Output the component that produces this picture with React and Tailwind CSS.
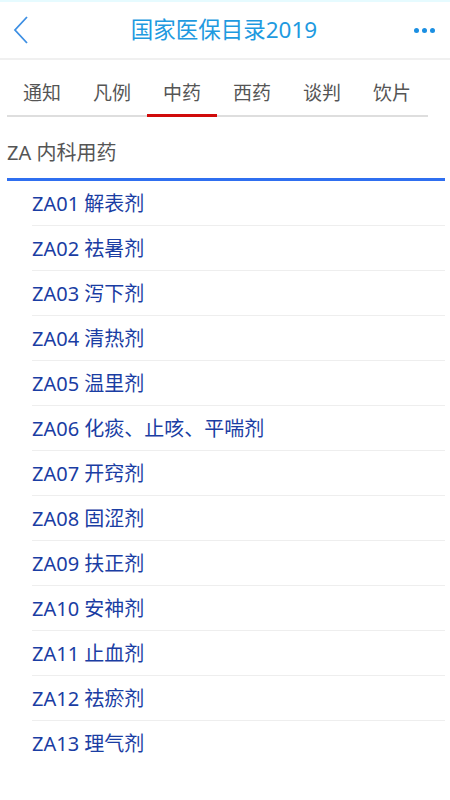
import React from 'react';

const tabs = ['通知', '凡例', '中药', '西药', '谈判', '饮片'];

const items = [
  'ZA01 解表剂',
  'ZA02 祛暑剂',
  'ZA03 泻下剂',
  'ZA04 清热剂',
  'ZA05 温里剂',
  'ZA06 化痰、止咳、平喘剂',
  'ZA07 开窍剂',
  'ZA08 固涩剂',
  'ZA09 扶正剂',
  'ZA10 安神剂',
  'ZA11 止血剂',
  'ZA12 祛瘀剂',
  'ZA13 理气剂',
];

export default function App() {
  const active = 2;

  return (
    <div
      className="w-[450px] h-[800px] bg-white overflow-hidden flex flex-col"
      style={{ fontFamily: '"Noto Sans", "Noto Sans CJK SC", sans-serif' }}
    >
      {/* status strip */}
      <div className="h-[2px] bg-[#e6fbff]" />

      {/* header */}
      <div className="h-[58px] flex items-center justify-between px-[12px] border-b-2 border-[#f0f0f0]">
        <svg width="18" height="30" viewBox="0 0 18 30">
          <path d="M15 2 L3 15 L15 28" fill="none" stroke="#3d8fe3" strokeWidth="1.8" />
        </svg>
        <h1 className="text-[22.5px] text-[#1e9ae0] font-normal leading-none ml-[4px]">国家医保目录2019</h1>
        <div className="flex gap-[3px] mr-[3px]">
          <span className="w-[5px] h-[5px] rounded-full bg-[#1b8fe2]" />
          <span className="w-[5px] h-[5px] rounded-full bg-[#1b8fe2]" />
          <span className="w-[5px] h-[5px] rounded-full bg-[#1b8fe2]" />
        </div>
      </div>

      {/* tabs */}
      <div className="px-[7px] pt-[19px]">
        <div className="flex w-[421px] border-b-2 border-[#dedede]">
          {tabs.map((t, i) => (
            <div key={t} className="w-[70px] relative flex justify-center h-[36px] items-start">
              <span className="text-[19px] text-[#555] leading-[28px]">{t}</span>
              {i === active && (
                <div className="absolute left-0 right-0 bottom-[-2px] h-[3px] bg-[#d00a0a]" />
              )}
            </div>
          ))}
        </div>
      </div>

      {/* section */}
      <div className="px-[7px] pr-[5px] mt-[22px]">
        <div className="text-[20px] text-[#555] leading-[28px] pb-[11px] border-b-[3px] border-[#2f6ff0]">
          ZA 内科用药
        </div>
      </div>

      <div className="pl-[32px] pr-[5px] h-[573px] overflow-hidden">
        {items.map((it) => (
          <div
            key={it}
            className="h-[45px] flex items-center border-b border-[#eeeeee] text-[20px] text-[#1a3da3] pt-[2px]"
          >
            {it}
          </div>
        ))}
      </div>
    </div>
  );
}
